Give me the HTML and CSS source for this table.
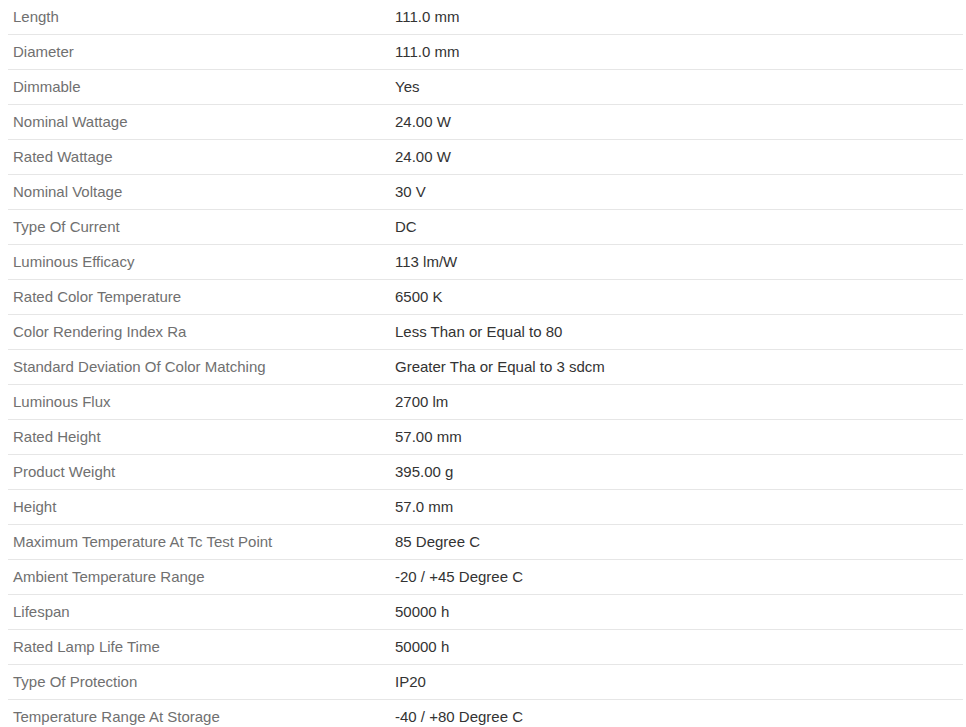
FILE: index.html
```html
<!DOCTYPE html>
<html>
<head>
<meta charset="utf-8">
<link rel="stylesheet" href="styles.css">
</head>
<body>
<table class="specs">
<tbody>
<tr><td class="label">Length</td><td class="value">111.0 mm</td></tr>
<tr><td class="label">Diameter</td><td class="value">111.0 mm</td></tr>
<tr><td class="label">Dimmable</td><td class="value">Yes</td></tr>
<tr><td class="label">Nominal Wattage</td><td class="value">24.00 W</td></tr>
<tr><td class="label">Rated Wattage</td><td class="value">24.00 W</td></tr>
<tr><td class="label">Nominal Voltage</td><td class="value">30 V</td></tr>
<tr><td class="label">Type Of Current</td><td class="value">DC</td></tr>
<tr><td class="label">Luminous Efficacy</td><td class="value">113 lm/W</td></tr>
<tr><td class="label">Rated Color Temperature</td><td class="value">6500 K</td></tr>
<tr><td class="label">Color Rendering Index Ra</td><td class="value">Less Than or Equal to 80</td></tr>
<tr><td class="label">Standard Deviation Of Color Matching</td><td class="value">Greater Tha or Equal to 3 sdcm</td></tr>
<tr><td class="label">Luminous Flux</td><td class="value">2700 lm</td></tr>
<tr><td class="label">Rated Height</td><td class="value">57.00 mm</td></tr>
<tr><td class="label">Product Weight</td><td class="value">395.00 g</td></tr>
<tr><td class="label">Height</td><td class="value">57.0 mm</td></tr>
<tr><td class="label">Maximum Temperature At Tc Test Point</td><td class="value">85 Degree C</td></tr>
<tr><td class="label">Ambient Temperature Range</td><td class="value">-20 / +45 Degree C</td></tr>
<tr><td class="label">Lifespan</td><td class="value">50000 h</td></tr>
<tr><td class="label">Rated Lamp Life Time</td><td class="value">50000 h</td></tr>
<tr><td class="label">Type Of Protection</td><td class="value">IP20</td></tr>
<tr><td class="label">Temperature Range At Storage</td><td class="value">-40 / +80 Degree C</td></tr>
</tbody>
</table>
</body>
</html>
```

FILE: styles.css
```css
html, body {
  margin: 0;
  padding: 0;
  background: #fff;
}
body {
  padding-left: 8px;
  font-family: "Liberation Sans", Arial, sans-serif;
  font-size: 15px;
}
.specs {
  width: 955px;
  margin-top: -1px;
  border-collapse: collapse;
  table-layout: fixed;
}
.specs td {
  height: 35px;
  padding: 0 5px;
  border-bottom: 1px solid #e6e6e6;
  vertical-align: middle;
  line-height: 17px;
  box-sizing: border-box;
}
.label {
  width: 382px;
  color: #707070;
}
.value {
  color: #333;
}
```
